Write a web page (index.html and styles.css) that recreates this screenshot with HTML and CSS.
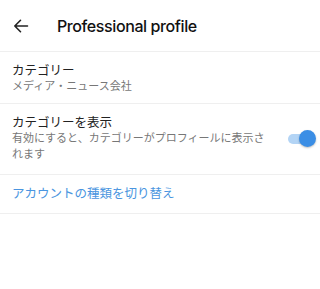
FILE: index.html
```html
<!DOCTYPE html>
<html lang="ja">
<head>
    <meta charset="UTF-8">
    <meta name="viewport" content="width=device-width, initial-scale=1.0">
    <title>Professional profile</title>
    <link rel="stylesheet" href="styles.css">
</head>
<body>
    <header class="topbar">
        <svg class="back" width="16" height="16" viewBox="0 0 16 16">
            <path d="M14.5 8H1.8M7.5 2.3L1.8 8l5.7 5.7" fill="none" stroke="#222" stroke-width="1.6" stroke-linecap="round" stroke-linejoin="round"/>
        </svg>
        <h1>Professional profile</h1>
    </header>
    <main>
        <div class="row">
            <div class="row-text">
                <div class="row-title">カテゴリー</div>
                <div class="row-sub">メディア・ニュース会社</div>
            </div>
        </div>
        <div class="row row-toggle">
            <div class="row-text">
                <div class="row-title">カテゴリーを表示</div>
                <div class="row-sub">有効にすると、カテゴリーがプロフィールに表示されます</div>
            </div>
            <div class="switch">
                <span class="track"></span>
                <span class="thumb"></span>
            </div>
        </div>
        <div class="row row-link">
            <a href="#" class="link">アカウントの種類を切り替え</a>
        </div>
    </main>
</body>
</html>
```

FILE: styles.css
```css
body {
    font-family: Roboto, "Noto Sans CJK JP", sans-serif;
    margin: 0;
    padding: 0;
    background-color: #fff;
    color: #222;
}

.topbar {
    display: flex;
    align-items: center;
    height: 51px;
    padding: 0 13px;
    border-bottom: 1px solid #efefef;
}

.back {
    flex: none;
}

.topbar h1 {
    margin: 0 0 0 28px;
    font-family: Inter, Roboto, sans-serif;
    font-size: 16px;
    font-weight: 500;
    letter-spacing: -0.4px;
    color: #111;
}

.row {
    display: flex;
    align-items: center;
    padding: 11px 12px 8px;
    border-bottom: 1px solid #efefef;
}

.row-text {
    width: 258px;
}

.row-title {
    font-size: 12.5px;
    line-height: 16px;
    color: #222;
}

.row-sub {
    font-size: 11px;
    line-height: 16px;
    color: #777;
}

.row-toggle {
    padding-bottom: 11px;
}

.switch {
    position: relative;
    width: 28px;
    height: 18px;
    margin-left: auto;
    margin-right: -8px;
}

.track {
    position: absolute;
    left: 0;
    top: 4px;
    width: 26px;
    height: 10px;
    border-radius: 5px;
    background-color: #b3d4f5;
}

.thumb {
    position: absolute;
    right: 0;
    top: 0;
    width: 17px;
    height: 17px;
    border-radius: 50%;
    background-color: #3b8ee5;
    box-shadow: 0 1px 2px rgba(0, 0, 0, 0.25);
}

.row-link {
    padding: 11px 12px;
}

.link {
    font-size: 12.5px;
    line-height: 16px;
    color: #4a95e0;
    text-decoration: none;
}
```
